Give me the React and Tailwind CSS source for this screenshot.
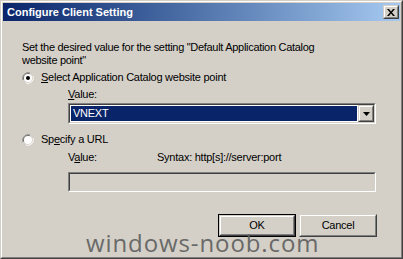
import React from "react";

const font = { fontFamily: '"Liberation Sans", Arial, sans-serif' };

const Radio = ({ checked }) => (
  <svg width="12" height="12" viewBox="0 0 12 12" className="shrink-0">
    <path d="M1 8 A5.5 5.5 0 0 1 8 1" fill="none" stroke="#808080" strokeWidth="1" />
    <path d="M11 4 A5.5 5.5 0 0 1 4 11" fill="none" stroke="#ffffff" strokeWidth="1" />
    <path d="M2 7.5 A4.5 4.5 0 0 1 7.5 2" fill="none" stroke="#404040" strokeWidth="1" />
    <path d="M10 4.5 A4.5 4.5 0 0 1 4.5 10" fill="none" stroke="#d4d0c8" strokeWidth="1" />
    <circle cx="6" cy="6" r="4" fill="#ffffff" />
    {checked && <circle cx="6" cy="6" r="2" fill="#000000" />}
  </svg>
);

const Raised = ({ className = "", children }) => (
  <div className={`border border-t-[#d4d0c8] border-l-[#d4d0c8] border-r-[#404040] border-b-[#404040] ${className}`}>
    <div className="h-full w-full border border-t-white border-l-white border-r-[#808080] border-b-[#808080] flex items-center justify-center">
      {children}
    </div>
  </div>
);

const Sunken = ({ className = "", children }) => (
  <div className={`border border-t-[#808080] border-l-[#808080] border-r-white border-b-white ${className}`}>
    <div className="h-full w-full border border-t-[#404040] border-l-[#404040] border-r-[#d4d0c8] border-b-[#d4d0c8] flex">
      {children}
    </div>
  </div>
);

export default function App() {
  return (
    <div className="w-[403px] h-[259px] bg-[#d4d0c8] text-black text-[11px] leading-[13px] tracking-[-0.25px]" style={font}>
      <div className="relative h-full border border-t-[#d4d0c8] border-l-[#d4d0c8] border-r-[#404040] border-b-[#404040]">
        <div className="h-full border border-t-white border-l-white border-r-[#808080] border-b-[#808080] p-px flex flex-col">
          {/* title bar */}
          <div className="h-[18px] shrink-0 flex items-center justify-between pl-[4px] pr-[1px] bg-gradient-to-r from-[#0a246a] to-[#a6caf0]">
            <span className="text-white font-bold text-[11px] tracking-normal">Configure Client Setting</span>
            <Raised className="w-[16px] h-[14px] bg-[#d4d0c8]">
              <svg width="8" height="7" viewBox="0 0 8 7">
                <path d="M0 0h2l2 2.5L6 0h2L5 3.5 8 7H6L4 4.5 2 7H0l3-3.5z" fill="#000" />
              </svg>
            </Raised>
          </div>

          {/* client */}
          <div className="flex flex-col pl-[19px]">
            <p className="mt-[20px] w-[312px] tracking-[-0.3px]">
              Set the desired value for the setting "Default Application Catalog website point"
            </p>

            <div className="mt-[4px] flex items-center gap-[7px] h-[13px]">
              <Radio checked />
              <span>
                <u>S</u>elect Application Catalog website point
              </span>
            </div>

            <div className="ml-[46px] mt-[4px]">
              <u>V</u>alue:
            </div>

            <Sunken className="ml-[46px] mt-[2px] w-[308px] h-[21px] bg-white">
              <div className="flex-1 m-px bg-[#0a246a] text-white pl-[2px] flex items-center">VNEXT</div>
              <Raised className="w-[16px] h-full bg-[#d4d0c8]">
                <svg width="7" height="4" viewBox="0 0 7 4">
                  <path d="M0 0h7L3.5 4z" fill="#000" />
                </svg>
              </Raised>
            </Sunken>

            <div className="mt-[9px] flex items-center gap-[7px] h-[13px]">
              <Radio />
              <span>
                Sp<u>e</u>cify a URL
              </span>
            </div>

            <div className="ml-[46px] mt-[5px] flex">
              <span className="w-[89px]">
                V<u>a</u>lue:
              </span>
              <span>Syntax: http[s]://server:port</span>
            </div>

            <Sunken className="ml-[46px] mt-[8px] w-[308px] h-[20px] bg-[#d4d0c8]" />

            <div className="mt-[22px] ml-[196px] flex gap-[3px]">
              <div className="border border-black w-[78px] h-[23px]">
                <Raised className="w-full h-full bg-[#d4d0c8]">OK</Raised>
              </div>
              <Raised className="w-[78px] h-[23px] bg-[#d4d0c8]">Cancel</Raised>
            </div>
          </div>
        </div>

        {/* watermark */}
        <div
          className="absolute left-[85px] top-[230px] text-[24px] leading-none tracking-[0.9px] text-[#5e5e5e] opacity-90 pointer-events-none"
          style={{ fontFamily: '"Open Sans", sans-serif' }}
        >
          windows-noob.com
        </div>
      </div>
    </div>
  );
}
